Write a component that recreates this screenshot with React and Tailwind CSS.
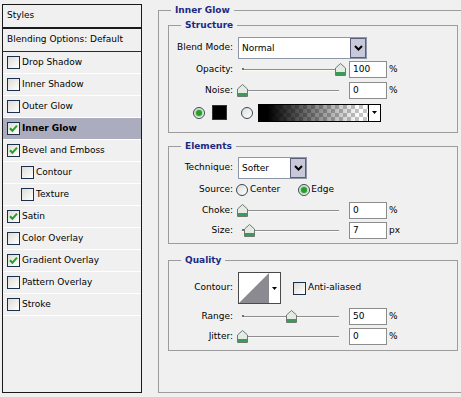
import React from "react";

const Check = ({ on }) => (
  <span className="w-[13px] h-[13px] shrink-0 border border-[#1c2f4a] bg-[linear-gradient(135deg,#dcdcd6,#ffffff)] flex items-center justify-center">
    {on && (
      <svg width="9" height="9" viewBox="0 0 9 9">
        <path d="M1 4.2 L3.4 6.8 L8 1.6" fill="none" stroke="#21a121" strokeWidth="2" />
      </svg>
    )}
  </span>
);

const Radio = ({ on }) => (
  <span className="w-[12px] h-[12px] shrink-0 rounded-full border border-[#3b4656] bg-[linear-gradient(135deg,#dcdcd6,#ffffff)] flex items-center justify-center">
    {on && <span className="w-[6px] h-[6px] rounded-full bg-[#2a9d2a] shadow-[0_0_0_1px_#a8dca8]" />}
  </span>
);

const Chevron = () => (
  <svg width="9" height="6" viewBox="0 0 9 6">
    <path d="M1 1 L4.5 4.5 L8 1" fill="none" stroke="#000" strokeWidth="2" />
  </svg>
);

const Select = ({ w, text }) => (
  <div className={`${w} h-[22px] flex border border-[#8d97a8] bg-white`}>
    <div className="flex-1 flex items-center pl-[3px] pt-[2px]">{text}</div>
    <div className="w-[16px] h-full bg-[#c8c8db] border border-[#5b5e7a] flex items-center justify-center">
      <Chevron />
    </div>
  </div>
);

const Thumb = ({ left }) => (
  <svg className="absolute top-[2px]" style={{ left }} width="11" height="13" viewBox="0 0 11 13">
    <path d="M5.5 0.5 L10.5 5 L10.5 12.5 L0.5 12.5 L0.5 5 Z" fill="#e4eae4" stroke="#6c7b71" />
    <rect x="1" y="9" width="9" height="3" fill="#3a9a58" />
  </svg>
);

const Slider = ({ pos }) => (
  <div className="relative w-[108px] h-[17px] shrink-0">
    <div className="absolute left-[4px] top-[8px] w-[97px] h-[2px] border-t border-[#8e8e8e] bg-[#fbfbf4]" />
    <div className="absolute left-[4px] top-[7px] w-[2px] h-[2px] bg-[#707070]" />
    <Thumb left={pos} />
  </div>
);

const Num = ({ v }) => (
  <div className="ml-[3px] w-[38px] h-[17px] shrink-0 border border-[#8c8c8c] bg-white pl-[3px] flex items-center">
    {v}
  </div>
);

const Label = ({ children }) => (
  <span className="w-[64px] mr-[5px] shrink-0 text-right">{children}</span>
);

const SliderRow = ({ cls, label, pos, v, unit }) => (
  <div className={`${cls} h-[17px] flex items-center`}>
    <Label>{label}</Label>
    <Slider pos={pos} />
    <Num v={v} />
    <span className="ml-[2px]">{unit}</span>
  </div>
);

const Box = ({ title, cls, children }) => (
  <div className={`${cls} relative w-[290px] border border-[#9c9c9c]`}>
    <span className="absolute -top-[7px] left-[12px] px-[4px] leading-[12px] bg-[#f0f0f0] font-bold text-[#1b2a84]">
      {title}
    </span>
    {children}
  </div>
);

const items = [
  { t: "Drop Shadow" },
  { t: "Inner Shadow" },
  { t: "Outer Glow" },
  { t: "Inner Glow", on: true, sel: true },
  { t: "Bevel and Emboss", on: true },
  { t: "Contour", sub: true },
  { t: "Texture", sub: true },
  { t: "Satin", on: true },
  { t: "Color Overlay" },
  { t: "Gradient Overlay", on: true },
  { t: "Pattern Overlay" },
  { t: "Stroke" },
];

export default function App() {
  return (
    <div className="w-[461px] h-[397px] overflow-hidden bg-[#f0f0f0] flex items-start font-['DejaVu_Sans',sans-serif] text-[9px] text-black">
      {/* Left list */}
      <div className="ml-[2px] mt-[4px] w-[140px] h-[389px] shrink-0 border border-[#1a1a1a] flex flex-col">
        <div className="h-[24px] border-b-2 border-[#1a1a1a] flex items-center pl-[4px]">Styles</div>
        <div className="h-[23px] border-b border-[#2a2a2a] flex items-center pl-[4px]">Blending Options: Default</div>
        {items.map((it) => (
          <div
            key={it.t}
            className={`h-[22px] flex items-center gap-[2px] border-b border-white ${
              it.sub ? "pl-[18px]" : "pl-[4px]"
            } ${it.sel ? "bg-[#abacbe] font-bold" : ""}`}
          >
            <Check on={it.on} />
            <span>{it.t}</span>
          </div>
        ))}
      </div>

      {/* Right pane */}
      <div className="ml-[16px] mt-[10px] w-[320px] h-[383px] shrink-0 relative border border-[#9c9c9c]">
        <span className="absolute -top-[7px] left-[12px] px-[4px] leading-[12px] bg-[#f0f0f0] font-bold text-[#1b2a84]">
          Inner Glow
        </span>

        <div className="ml-[9px] mt-[14px] flex flex-col">
          <Box title="Structure" cls="h-[108px]">
            <div className="flex flex-col pt-[11px]">
              <div className="h-[22px] flex items-center">
                <Label>Blend Mode:</Label>
                <Select w="w-[129px]" text="Normal" />
              </div>
              <SliderRow cls="mt-[2px]" label="Opacity:" pos={97} v="100" unit="%" />
              <SliderRow cls="mt-[4px]" label="Noise:" pos={-1} v="0" unit="%" />
              <div className="mt-[4px] h-[19px] flex items-center pl-[24px]">
                <Radio on />
                <span className="ml-[7px] w-[15px] h-[15px] bg-black border border-[#333]" />
                <span className="ml-[14px]">
                  <Radio />
                </span>
                <div className="ml-[5px] h-[18px] flex border border-black">
                  <div className="w-[110px] h-full border-r border-black bg-[linear-gradient(to_right,#000_8%,rgba(0,0,0,0)_92%),repeating-conic-gradient(#c4c4c4_0_25%,#ffffff_0_50%)] [background-size:100%_100%,8px_8px]" />
                  <div className="w-[11px] h-full bg-white flex items-center justify-center">
                    <svg width="5" height="3" viewBox="0 0 5 3">
                      <path d="M0 0 L5 0 L2.5 3 Z" fill="#000" />
                    </svg>
                  </div>
                </div>
              </div>
            </div>
          </Box>

          <Box title="Elements" cls="mt-[13px] h-[98px]">
            <div className="flex flex-col pt-[10px]">
              <div className="h-[22px] flex items-center">
                <Label>Technique:</Label>
                <Select w="w-[69px]" text="Softer" />
              </div>
              <div className="mt-[3px] h-[16px] flex items-center">
                <span className="w-[64px] mr-[3px] shrink-0 text-right">Source:</span>
                <Radio />
                <span className="ml-[2px]">Center</span>
                <span className="ml-[18px]">
                  <Radio on />
                </span>
                <span className="ml-[1px]">Edge</span>
              </div>
              <SliderRow cls="mt-[4px]" label="Choke:" pos={-1} v="0" unit="%" />
              <SliderRow cls="mt-[3px]" label="Size:" pos={6} v="7" unit="px" />
            </div>
          </Box>

          <Box title="Quality" cls="mt-[16px] h-[91px]">
            <div className="flex flex-col pt-[11px]">
              <div className="h-[32px] flex items-center">
                <Label>Contour:</Label>
                <div className="w-[43px] h-[32px] border border-[#4a4a4a] bg-white flex">
                  <svg width="30" height="30" viewBox="0 0 30 30">
                    <polygon points="0,30 30,0 30,30" fill="#8a8a90" />
                  </svg>
                  <div className="flex-1 flex items-center justify-center">
                    <svg width="5" height="3" viewBox="0 0 5 3">
                      <path d="M0 0 L5 0 L2.5 3 Z" fill="#000" />
                    </svg>
                  </div>
                </div>
                <span className="ml-[12px]">
                  <Check />
                </span>
                <span className="ml-[2px]">Anti-aliased</span>
              </div>
              <SliderRow cls="mt-[4px]" label="Range:" pos={48} v="50" unit="%" />
              <SliderRow cls="mt-[3px]" label="Jitter:" pos={-1} v="0" unit="%" />
            </div>
          </Box>
        </div>
      </div>
    </div>
  );
}
